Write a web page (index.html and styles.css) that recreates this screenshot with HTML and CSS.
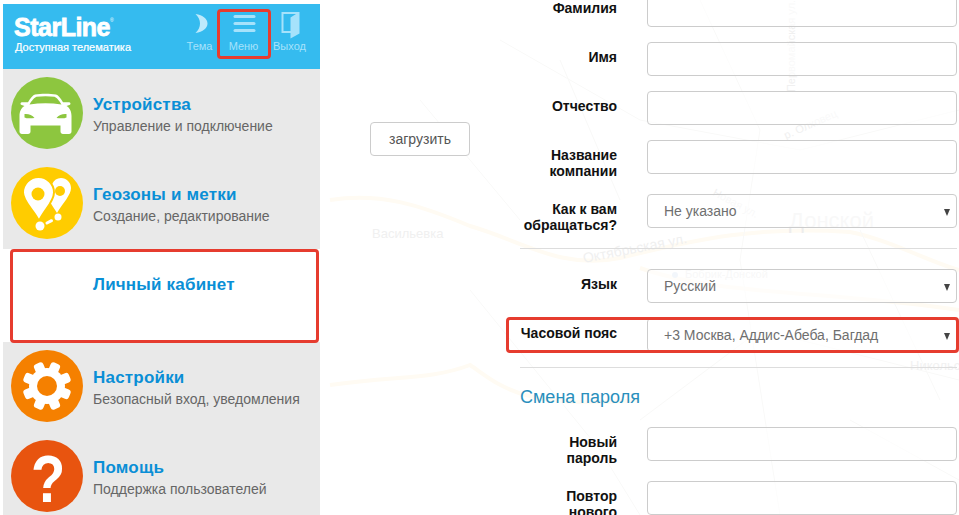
FILE: index.html
```html
<!DOCTYPE html>
<html lang="ru">
<head>
<meta charset="utf-8">
<title>StarLine</title>
<link rel="stylesheet" href="styles.css">
</head>
<body>
<div class="map" aria-hidden="true">
  <svg class="map-roads" width="959" height="515" viewBox="0 0 959 515" fill="none">
    <path class="road" d="M330 200C380 192 420 205 470 226C520 240 560 270 620 258C700 238 760 226 850 232C890 240 930 262 959 270"/>
    <path class="road" d="M640 268C720 296 820 290 959 310"/>
    <path class="road" d="M330 385C400 375 430 380 470 365C500 385 520 410 640 400"/>
    <path class="lane" d="M500 40L640 120L800 150L959 110M700 0L760 130L740 260L780 515M470 290L600 450L640 515M860 230L940 400M640 420L760 330L959 380M420 100L520 220M560 60L620 200M850 420L959 480"/>
    <circle cx="675" cy="275" r="3" fill="#dfe9f5"/>
  </svg>
  <span class="map-label map-vas">Васильевка</span>
  <span class="map-label map-don">Донской</span>
  <span class="map-label map-nik">Никольское</span>
  <span class="map-label map-bob">Бобрик-Донской</span>
  <span class="map-label map-okt">Октябрьская ул.</span>
  <span class="map-label map-nov">Новая ул.</span>
  <span class="map-label map-per">Первомайская ул.</span>
  <span class="map-label map-olh">р. Олховец</span>
</div>

<div class="page">
  <aside class="sidebar">
    <header class="topbar">
      <div class="brand">
        <div class="brand-name">StarLine<sup class="brand-mark">®</sup></div>
        <div class="brand-sub">Доступная телематика</div>
      </div>
      <nav class="top-actions">
        <div class="top-action">
          <svg class="top-icon top-icon-moon" width="24" height="31" viewBox="0 0 24 31"><path d="M7.500 5C15 6 19.500 10 19.500 14.500S15 23 7.500 24C10.500 21 12 18 12 14.500S10.500 8 7.500 5Z"/></svg>
          <span>Тема</span>
        </div>
        <div class="top-action">
          <svg class="top-icon" width="24" height="31" viewBox="0 0 24 31"><rect x="1.500" y="6" width="22" height="3" rx="1.500"/><rect x="1.500" y="13" width="22" height="3" rx="1.500"/><rect x="1.500" y="20" width="22" height="3" rx="1.500"/></svg>
          <span>Меню</span>
        </div>
        <div class="top-action top-action-exit">
          <svg class="top-icon" width="24" height="31" viewBox="0 0 24 31"><path fill-rule="evenodd" d="M3.500 3H21.500V24.500L12.500 29.500V24H3.500ZM5.500 5V22H12.500V8.500L18 5Z"/></svg>
          <span>Выход</span>
        </div>
      </nav>
    </header>

    <ul class="menu">
      <li class="menu-item">
        <svg class="menu-icon" width="72" height="72" viewBox="0 0 72 72">
          <circle cx="36" cy="36" r="36" fill="#8dc63f"/>
          <path fill="#fff" d="M24 17.500C30 16.500 39 16.500 45 17.500C47 18 49.500 21 52 25.200H58C59.500 25.200 60 27 59 27.800L55.500 29C59 31 60.500 35 60.500 39V54.500C60.500 56 59.500 57 58 57H52C50.500 57 49.500 56 49.500 54.500V48.500H19.500V54.500C19.500 56 18.500 57 17 57H11C9.500 57 8.500 56 8.500 54.500V39C8.500 35 10 31 13.500 29L10 27.800C9 27 9.500 25.200 11 25.200H17C19.500 21 22 18 24 17.500Z"/>
          <path fill="#8dc63f" d="M25.500 19.800C31 19 38 19 43.500 19.800C45.500 20.500 48.500 24 50.500 27.500C40 25.800 29 25.800 18.500 27.500C20.500 24 23.500 20.500 25.500 19.800Z"/>
          <path fill="#8dc63f" d="M13.500 37C17 36.500 21.500 38 23.500 41C19.500 41.500 15 41.500 13.500 40.500ZM55.500 37C52 36.500 47.500 38 45.500 41C49.500 41.500 54 41.500 55.500 40.500Z"/>
        </svg>
        <div class="menu-text">
          <div class="menu-title">Устройства</div>
          <div class="menu-sub">Управление и подключение</div>
        </div>
      </li>
      <li class="menu-item">
        <svg class="menu-icon" width="72" height="72" viewBox="0 0 72 72">
          <circle cx="36" cy="36" r="36" fill="#ffcc00"/>
          <path fill="#fff" d="M50 11C55.500 11 60 15.500 60 21C60 28 52 36 46 46C43 41 40 37 38 33C38 20 42 11 50 11Z"/>
          <circle cx="49" cy="24" r="5" fill="#ffcc00"/>
          <path fill="#fff" stroke="#ffcc00" stroke-width="2" d="M27.500 10C36 10 43 17 43 25.500C43 35 33 43 28 54C23 43 12 35 12 25.500C12 17 19 10 27.500 10Z"/>
          <circle cx="27" cy="27" r="6.500" fill="#ffcc00"/>
          <circle cx="29" cy="59" r="4.500" fill="#fff"/>
          <circle cx="47" cy="50" r="3.500" fill="#fff"/>
          <path stroke="#fff" stroke-width="3" stroke-linecap="round" fill="none" d="M36 56L40.500 53.700"/>
        </svg>
        <div class="menu-text">
          <div class="menu-title">Геозоны и метки</div>
          <div class="menu-sub">Создание, редактирование</div>
        </div>
      </li>
      <li class="menu-item menu-item-active">
        <div class="menu-text">
          <div class="menu-title">Личный кабинет</div>
        </div>
      </li>
      <li class="menu-item">
        <svg class="menu-icon" width="72" height="72" viewBox="0 0 72 72">
          <circle cx="36" cy="36" r="36" fill="#f58000"/>
          <g fill="#fff">
            <circle cx="36" cy="36" r="18"/>
            <rect x="31" y="11.500" width="10" height="12" rx="3" transform="rotate(22.500 36 36)"/>
            <rect x="31" y="11.500" width="10" height="12" rx="3" transform="rotate(67.500 36 36)"/>
            <rect x="31" y="11.500" width="10" height="12" rx="3" transform="rotate(112.500 36 36)"/>
            <rect x="31" y="11.500" width="10" height="12" rx="3" transform="rotate(157.500 36 36)"/>
            <rect x="31" y="11.500" width="10" height="12" rx="3" transform="rotate(202.500 36 36)"/>
            <rect x="31" y="11.500" width="10" height="12" rx="3" transform="rotate(247.500 36 36)"/>
            <rect x="31" y="11.500" width="10" height="12" rx="3" transform="rotate(292.500 36 36)"/>
            <rect x="31" y="11.500" width="10" height="12" rx="3" transform="rotate(337.500 36 36)"/>
          </g>
          <circle cx="36" cy="36" r="10" fill="#f58000"/>
        </svg>
        <div class="menu-text">
          <div class="menu-title">Настройки</div>
          <div class="menu-sub">Безопасный вход, уведомления</div>
        </div>
      </li>
      <li class="menu-item">
        <div class="menu-badge"><span class="menu-badge-mark">?</span></div>
        <div class="menu-text">
          <div class="menu-title">Помощь</div>
          <div class="menu-sub">Поддержка пользователей</div>
        </div>
      </li>
    </ul>
  </aside>

  <main class="content">
    <div class="avatar-col">
      <button class="upload" type="button">загрузить</button>
    </div>
    <form class="form">
      <div class="row"><label class="lbl">Фамилия</label><div class="field"></div></div>
      <div class="row"><label class="lbl">Имя</label><div class="field"></div></div>
      <div class="row"><label class="lbl">Отчество</label><div class="field"></div></div>
      <div class="row"><label class="lbl">Название компании</label><div class="field"></div></div>
      <div class="row"><label class="lbl">Как к вам обращаться?</label><div class="field select">Не указано</div></div>
      <hr class="rule rule-a">
      <div class="row"><label class="lbl">Язык</label><div class="field select">Русский</div></div>
      <div class="row"><label class="lbl lbl-nowrap">Часовой пояс</label><div class="field select">+3 Москва, Аддис-Абеба, Багдад</div></div>
      <hr class="rule">
      <h2 class="section">Смена пароля</h2>
      <div class="row row-new"><label class="lbl">Новый пароль</label><div class="field"></div></div>
      <div class="row"><label class="lbl lbl-narrow">Повтор нового пароля</label><div class="field"></div></div>
    </form>
  </main>
</div>

<div class="mark mark-menu"></div>
<div class="mark mark-cabinet"></div>
<div class="mark mark-tz"></div>
</body>
</html>
```

FILE: styles.css
```css
* { box-sizing: border-box; }
html, body { margin: 0; height: 515px; overflow: hidden; background: #fff; }
body { position: relative; width: 959px; font-family: "Liberation Sans", Arial, sans-serif; }

.map { position: absolute; inset: 0; overflow: hidden; }
.map-roads { position: absolute; left: 0; top: 0; }
.road { stroke: #fffbf3; stroke-width: 4; }
.lane { stroke: #f9f9f8; stroke-width: 1; }
.map-label { position: absolute; color: #f0f0f0; font-size: 13px; white-space: nowrap; }
.map-vas { left: 372px; top: 226px; }
.map-don { left: 789px; top: 208px; font-size: 22px; color: #ededed; }
.map-nik { left: 910px; top: 358px; color: #f1f1f1; }
.map-bob { left: 685px; top: 268px; font-size: 11px; color: #ececec; }
.map-okt { left: 582px; top: 240px; font-size: 14px; transform: rotate(-11deg); }
.map-nov { left: 711px; top: 197px; font-size: 11px; transform: rotate(28deg); }
.map-per { left: 745px; top: 40px; font-size: 11px; transform: rotate(-90deg); }
.map-olh { left: 782px; top: 118px; font-size: 11px; transform: rotate(-24deg); }

.page { position: relative; display: flex; height: 515px; overflow: hidden; }

.sidebar { width: 317px; margin: 4px 0 0 3px; flex: none; }
.topbar { height: 65px; background: #35bbef; display: flex; justify-content: space-between; padding: 0 13px 0 11px; }
.brand { color: #fff; padding-top: 11px; }
.brand-name { font-size: 25px; line-height: 24px; font-weight: 700; letter-spacing: -.5px; -webkit-text-stroke: .8px #fff; }
.brand-mark { font-size: 5px; font-weight: 400; letter-spacing: 0; vertical-align: 14px; line-height: 0; -webkit-text-stroke: 0; }
.brand-sub { font-size: 11px; line-height: 13px; margin-top: 2px; margin-left: 1px; -webkit-text-stroke: .2px #fff; }
.top-actions { display: flex; gap: 9px; padding-top: 5px; }
.top-action { width: 35px; display: flex; flex-direction: column; align-items: center; color: #a6e2fb; font-size: 11px; line-height: 13px; }
.top-action-exit { margin-left: 2px; }
.top-icon { fill: #a6e2fb; display: block; }
.top-icon-moon { fill: #bdeafc; }

.menu { list-style: none; margin: 0; padding: 0; }
.menu-item { height: 90px; background: #e9e9e9; display: flex; align-items: flex-start; padding: 8px 0 0 8px; gap: 10px; }
.menu-item-active { height: 93px; background: #fff; padding-left: 90px; }
.menu-icon { flex: none; display: block; }
.menu-badge { width: 72px; height: 72px; flex: none; border-radius: 50%; background: #e8540f; color: #fff; font-size: 66px; font-weight: 700; line-height: 78px; text-align: center; padding-left: 2px; }
.menu-badge-mark { display: inline-block; transform: scaleX(.85); }
.menu-text { padding-top: 18px; }
.menu-title { color: #0a8fd6; font-size: 17px; line-height: 20px; font-weight: 700; letter-spacing: .2px; }
.menu-sub { color: #666; font-size: 14px; line-height: 18px; margin-top: 2px; }

.content { flex: 1; display: flex; min-width: 0; }
.avatar-col { width: 200px; flex: none; padding: 122px 0 0 50px; }
.upload { width: 100px; height: 34px; border: 1px solid #ccc; border-radius: 4px; background: #fff; color: #555; font: 14px "Liberation Sans", Arial, sans-serif; padding: 0; display: block; }

.form { width: 437px; flex: none; margin-top: -7px; }
.row { display: flex; align-items: flex-start; margin-bottom: 15px; }
.lbl { width: 97px; flex: none; margin-right: 30px; text-align: right; font-size: 14px; line-height: 16px; font-weight: 700; color: #111; padding-top: 7px; }
.lbl-nowrap { white-space: nowrap; }
.lbl-narrow { padding-left: 20px; }
.field { width: 310px; height: 34px; border: 1px solid #ccc; border-radius: 4px; background: rgba(255,255,255,.6); position: relative; padding: 0 16px; font-size: 14px; line-height: 33px; color: #6f6f6f; }
.select::after { content: ""; position: absolute; right: 6px; top: 14px; border-style: solid; border-width: 7px 3.5px 0; border-color: #444 transparent transparent; }
.rule { height: 1px; border: 0; background: #ddd; margin: 0; }
.rule-a { margin-bottom: 20px; }
.section { margin: 19px 0 20px; font-size: 18px; line-height: 20px; font-weight: 400; color: #2a8fbd; }

.mark { position: absolute; border: 3px solid #e63c2f; border-radius: 4px; }
.mark-menu { left: 217px; top: 9px; width: 54px; height: 50px; }
.mark-cabinet { left: 10px; top: 249px; width: 309px; height: 94px; }
.mark-tz { left: 506px; top: 317px; width: 453px; height: 36px; }
```
